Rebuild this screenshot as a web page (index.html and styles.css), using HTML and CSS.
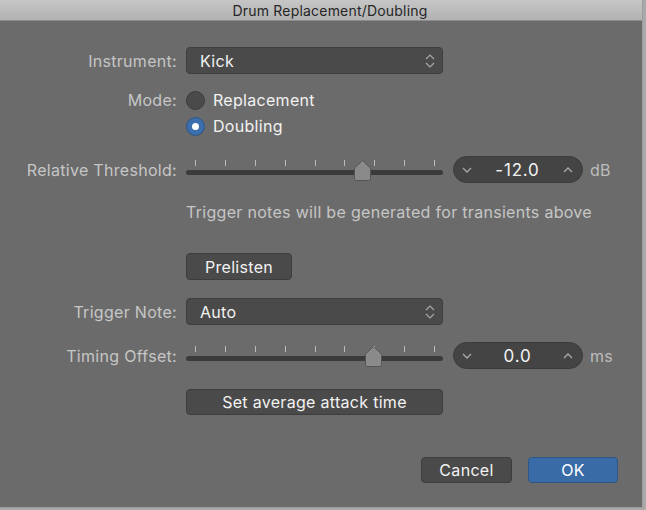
FILE: index.html
```html
<!DOCTYPE html>
<html>
<head>
<meta charset="utf-8">
<link rel="stylesheet" href="styles.css">
</head>
<body>
<div class="window">
  <div class="titlebar">Drum Replacement/Doubling</div>
  <div class="content">
    <div class="row r-instrument">
      <div class="label">Instrument:</div>
      <div class="popup"><span>Kick</span>
        <svg class="updown" width="10" height="16" viewBox="0 0 10 16"><path d="M1 6 L5 2 L9 6 M1 10 L5 14 L9 10" fill="none" stroke="#a8a8a8" stroke-width="1.2"/></svg>
      </div>
    </div>
    <div class="row r-mode1">
      <div class="label">Mode:</div>
      <div class="radio-item"><span class="radio"></span><span class="val">Replacement</span></div>
    </div>
    <div class="row r-mode2">
      <div class="label"></div>
      <div class="radio-item"><span class="radio on"></span><span class="val">Doubling</span></div>
    </div>
    <div class="row r-thresh">
      <div class="label">Relative Threshold:</div>
      <div class="slider-line">
        <div class="slider">
          <div class="ticks"><i></i><i></i><i></i><i></i><i></i><i></i><i></i><i></i><i></i></div>
          <div class="track"></div>
          <svg class="thumb" style="left:167px" width="19" height="23" viewBox="0 0 19 23"><path d="M1.5 9 L9.5 1.5 L17.5 9 V19.5 Q17.5 21.5 15.5 21.5 H3.5 Q1.5 21.5 1.5 19.5 Z" fill="#8a8a8a" stroke="#555" stroke-width="1"/></svg>
        </div>
        <div class="stepper">
          <svg width="10" height="6" viewBox="0 0 10 6"><path d="M1 1 L5 5 L9 1" fill="none" stroke="#a8a8a8" stroke-width="1.3"/></svg>
          <span class="num">-12.0</span>
          <svg width="10" height="6" viewBox="0 0 10 6"><path d="M1 5 L5 1 L9 5" fill="none" stroke="#a8a8a8" stroke-width="1.3"/></svg>
        </div>
        <span class="unit">dB</span>
      </div>
    </div>
    <div class="row r-note">
      <div class="label"></div>
      <div class="hint">Trigger notes will be generated for transients above</div>
    </div>
    <div class="row r-prelisten">
      <div class="label"></div>
      <button class="btn prelisten">Prelisten</button>
    </div>
    <div class="row r-trigger">
      <div class="label">Trigger Note:</div>
      <div class="popup"><span>Auto</span>
        <svg class="updown" width="10" height="16" viewBox="0 0 10 16"><path d="M1 6 L5 2 L9 6 M1 10 L5 14 L9 10" fill="none" stroke="#a8a8a8" stroke-width="1.2"/></svg>
      </div>
    </div>
    <div class="row r-timing">
      <div class="label">Timing Offset:</div>
      <div class="slider-line">
        <div class="slider">
          <div class="ticks"><i></i><i></i><i></i><i></i><i></i><i></i><i></i><i></i><i></i></div>
          <div class="track"></div>
          <svg class="thumb" style="left:178px" width="19" height="23" viewBox="0 0 19 23"><path d="M1.5 9 L9.5 1.5 L17.5 9 V19.5 Q17.5 21.5 15.5 21.5 H3.5 Q1.5 21.5 1.5 19.5 Z" fill="#8a8a8a" stroke="#555" stroke-width="1"/></svg>
        </div>
        <div class="stepper">
          <svg width="10" height="6" viewBox="0 0 10 6"><path d="M1 1 L5 5 L9 1" fill="none" stroke="#a8a8a8" stroke-width="1.3"/></svg>
          <span class="num">0.0</span>
          <svg width="10" height="6" viewBox="0 0 10 6"><path d="M1 5 L5 1 L9 5" fill="none" stroke="#a8a8a8" stroke-width="1.3"/></svg>
        </div>
        <span class="unit">ms</span>
      </div>
    </div>
    <div class="row r-attack">
      <div class="label"></div>
      <button class="btn attack">Set average attack time</button>
    </div>
    <div class="footer">
      <button class="btn cancel">Cancel</button>
      <button class="btn ok">OK</button>
    </div>
  </div>
</div>
</body>
</html>
```

FILE: styles.css
```css
html, body {
  margin: 0;
  padding: 0;
  background: #a9a9a9;
}
body {
  width: 646px;
  height: 510px;
  overflow: hidden;
  font-family: Inter, "Liberation Sans", sans-serif;
  letter-spacing: 0.3px;
}
.window {
  width: 642px;
  height: 507px;
  background: #6b6b6b;
  border-right: 1px solid #9c9c9c;
  border-bottom: 1px solid #9c9c9c;
  display: flex;
  flex-direction: column;
}
.titlebar {
  height: 20px;
  border-bottom: 1px solid #8c8c8c;
  background: linear-gradient(#c6c6c6, #b2b2b2);
  color: #262626;
  font-size: 14px;
  letter-spacing: 0.2px;
  line-height: 21px;
  text-align: center;
  padding-left: 18px;
}
.content {
  display: flex;
  flex-direction: column;
}
.row {
  display: flex;
  align-items: center;
  column-gap: 9px;
}
.label {
  width: 177px;
  flex: none;
  text-align: right;
  color: #c6c6c6;
  font-size: 16px;
}
.val, .popup span {
  color: #f2f2f2;
  font-size: 16px;
}
.r-instrument { margin-top: 26px; height: 27px; }
.r-mode1 { margin-top: 13px; height: 26px; }
.r-mode2 { height: 26px; }
.r-thresh { margin-top: 17px; height: 27px; }
.r-note { margin-top: 19px; height: 20px; }
.r-prelisten { margin-top: 31px; height: 27px; }
.r-trigger { margin-top: 18px; height: 27px; }
.r-timing { margin-top: 17px; height: 27px; }
.r-attack { margin-top: 20px; height: 26px; }

.popup {
  box-sizing: border-box;
  width: 257px;
  height: 27px;
  background: #4a4a4a;
  border: 1px solid #3e3e3e;
  border-radius: 4px;
  display: flex;
  align-items: center;
  justify-content: space-between;
  padding: 0 7px 0 13px;
}
.radio-item {
  display: flex;
  align-items: center;
  gap: 8px;
}
.radio {
  box-sizing: border-box;
  width: 19px;
  height: 19px;
  border-radius: 50%;
  background: #4a4a4a;
  border: 1px solid #3c3c3c;
  display: flex;
  align-items: center;
  justify-content: center;
}
.radio.on {
  background: #3a6eac;
  border-color: #2f5584;
}
.radio.on::after {
  content: "";
  width: 7px;
  height: 7px;
  border-radius: 50%;
  background: #ffffff;
}
.slider-line {
  display: flex;
  align-items: center;
}
.slider {
  position: relative;
  width: 257px;
  height: 27px;
}
.ticks {
  display: flex;
  justify-content: space-between;
  padding: 4px 8px 0 9px;
  height: 6px;
}
.ticks i {
  width: 1px;
  height: 6px;
  background: #bdbdbd;
}
.track {
  margin-top: 4px;
  height: 5px;
  border-radius: 3px;
  background: #3b3b3b;
}
.thumb {
  position: absolute;
  top: 3px;
}
.stepper {
  box-sizing: border-box;
  margin-left: 10px;
  width: 130px;
  height: 27px;
  border-radius: 14px;
  background: #444444;
  border: 1px solid #3b3b3b;
  display: flex;
  align-items: center;
  justify-content: space-between;
  padding: 0 9px 0 8px;
}
.num {
  color: #f2f2f2;
  font-size: 17px;
  letter-spacing: 0.8px;
}
.unit {
  margin-left: 7px;
  color: #bdbdbd;
  font-size: 16px;
}
.hint {
  color: #c6c6c6;
  font-size: 16px;
}
.btn {
  box-sizing: border-box;
  height: 27px;
  background: #4a4a4a;
  border: 1px solid #3d3d3d;
  border-radius: 4px;
  color: #f2f2f2;
  font-family: Inter, "Liberation Sans", sans-serif;
  font-size: 16px;
  letter-spacing: 0.3px;
  padding: 0;
}
.prelisten { width: 106px; }
.attack { width: 257px; height: 26px; }
.footer {
  margin-top: 42px;
  display: flex;
  gap: 16px;
  padding-left: 421px;
}
.cancel { width: 91px; height: 26px; }
.ok {
  width: 90px;
  height: 26px;
  background: #396ca6;
  border-color: #2d5585;
  color: #ffffff;
}
```
